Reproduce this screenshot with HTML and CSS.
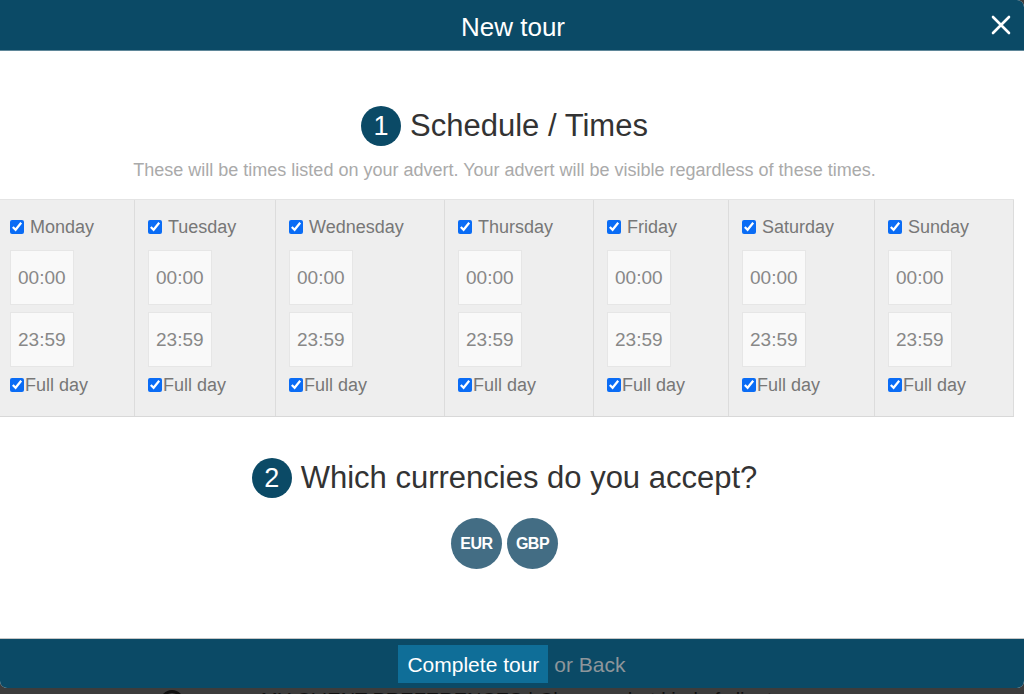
FILE: index.html
```html
<!DOCTYPE html>
<html lang="en">
<head>
    <meta charset="UTF-8">
    <meta name="viewport" content="width=device-width, initial-scale=1.0">
    <title>New tour</title>
    <link rel="stylesheet" href="styles.css">
</head>
<body>
    <div class="modal">
        <!-- Header -->
        <div class="modal-header">
            <span></span>
            <h1>New tour</h1>
            <button class="close-btn" aria-label="Close">
                <svg width="20" height="20" viewBox="0 0 20 20"><path d="M2 2 L18 18 M18 2 L2 18" stroke="#fff" stroke-width="2.6" stroke-linecap="round"/></svg>
            </button>
        </div>

        <div class="modal-body">
            <!-- Step 1 -->
            <div class="centered">
                <h2 class="step-title"><span class="step-num">1</span>Schedule / Times</h2>
                <p class="step-note">These will be times listed on your advert. Your advert will be visible regardless of these times.</p>
            </div>

            <div class="schedule">
                <div class="day"><label class="day-name"><input type="checkbox" checked>Monday</label><input class="time" type="text" value="00:00"><input class="time" type="text" value="23:59"><label class="full-day"><input type="checkbox" checked>Full day</label></div>
                <div class="day"><label class="day-name"><input type="checkbox" checked>Tuesday</label><input class="time" type="text" value="00:00"><input class="time" type="text" value="23:59"><label class="full-day"><input type="checkbox" checked>Full day</label></div>
                <div class="day"><label class="day-name"><input type="checkbox" checked>Wednesday</label><input class="time" type="text" value="00:00"><input class="time" type="text" value="23:59"><label class="full-day"><input type="checkbox" checked>Full day</label></div>
                <div class="day"><label class="day-name"><input type="checkbox" checked>Thursday</label><input class="time" type="text" value="00:00"><input class="time" type="text" value="23:59"><label class="full-day"><input type="checkbox" checked>Full day</label></div>
                <div class="day"><label class="day-name"><input type="checkbox" checked>Friday</label><input class="time" type="text" value="00:00"><input class="time" type="text" value="23:59"><label class="full-day"><input type="checkbox" checked>Full day</label></div>
                <div class="day"><label class="day-name"><input type="checkbox" checked>Saturday</label><input class="time" type="text" value="00:00"><input class="time" type="text" value="23:59"><label class="full-day"><input type="checkbox" checked>Full day</label></div>
                <div class="day"><label class="day-name"><input type="checkbox" checked>Sunday</label><input class="time" type="text" value="00:00"><input class="time" type="text" value="23:59"><label class="full-day"><input type="checkbox" checked>Full day</label></div>
            </div>

            <!-- Step 2 -->
            <div class="centered">
                <h2 class="step-title step-two"><span class="step-num">2</span>Which currencies do you accept?</h2>
                <div class="currencies">
                    <span class="currency">EUR</span>
                    <span class="currency">GBP</span>
                </div>
            </div>
        </div>

        <!-- Footer -->
        <div class="modal-footer">
            <button class="complete-btn">Complete tour</button>
            <a class="back-link" href="#">or Back</a>
        </div>
    </div>

    <!-- page behind the overlay -->
    <div class="behind">
        <span class="behind-icon"></span>
        <span class="behind-text">MY CLIENT PREFERENCES | Choose what kind of clients</span>
    </div>
</body>
</html>
```

FILE: styles.css
```css
body {
    margin: 0;
    background-color: #3c3c3c;
    font-family: "Liberation Sans", Arial, Helvetica, sans-serif;
    overflow: hidden;
}
.modal {
    height: 688px;
    display: flex;
    flex-direction: column;
    background-color: #fff;
    border-radius: 0 7px 7px 7px;
    overflow: hidden;
}
.modal-header {
    height: 50px;
    flex-shrink: 0;
    display: grid;
    grid-template-columns: 1fr auto 1fr;
    align-items: center;
    background-color: #0b4a66;
    border-bottom: 1px solid #5f8799;
}
.modal-header h1 {
    margin: 4px 0 0;
    font-size: 26px;
    font-weight: normal;
    color: #fff;
    padding-left: 2px;
}
.close-btn {
    justify-self: end;
    margin-right: 13px;
    padding: 0;
    border: 0;
    background: none;
    display: flex;
}
.modal-body {
    flex: 1;
}
.centered {
    padding-right: 15px;
    text-align: center;
}
.step-title {
    margin: 55px 0 0;
    height: 40px;
    display: flex;
    justify-content: center;
    align-items: center;
    gap: 9px;
    font-size: 31px;
    font-weight: normal;
    color: #333;
}
.step-num {
    width: 40px;
    height: 40px;
    border-radius: 50%;
    background-color: #0b4a66;
    color: #fff;
    font-size: 27px;
    line-height: 40px;
    text-align: center;
}
.step-note {
    margin: 14px 0 0;
    font-size: 18px;
    line-height: 20px;
    color: #aaa;
}
.schedule {
    margin: 19px 0 0 -3px;
    display: grid;
    grid-template-columns: 138px 141px 169px 149px 135px 146px 139px;
    width: 1017px;
    background-color: #eee;
    border-top: 1px solid #e4e4e4;
    border-bottom: 1px solid #d8d8d8;
}
.day {
    display: flex;
    flex-direction: column;
    align-items: flex-start;
    padding: 17px 0 21px 13px;
    border-right: 1px solid #dcdcdc;
    color: #777;
    font-size: 18px;
}
.day input[type="checkbox"] {
    width: 14px;
    height: 14px;
    margin: 0;
    accent-color: #0a6cf5;
}
.day-name {
    display: flex;
    align-items: center;
    gap: 6px;
    height: 20px;
}
.time {
    width: 64px;
    height: 55px;
    box-sizing: border-box;
    margin-top: 13px;
    padding: 0 0 0 7px;
    border: 1px solid #e6e6e6;
    background-color: #f9f9f9;
    font-family: inherit;
    font-size: 19px;
    color: #888;
}
.time + .time {
    margin-top: 7px;
}
.full-day {
    display: flex;
    align-items: center;
    gap: 1px;
    margin-top: 8px;
    height: 20px;
}
.step-two {
    margin-top: 41px;
}
.currencies {
    margin-top: 20px;
    display: flex;
    justify-content: center;
    gap: 5px;
}
.currency {
    width: 51px;
    height: 51px;
    border-radius: 50%;
    background-color: #436d84;
    color: #fff;
    font-size: 16px;
    font-weight: bold;
    line-height: 51px;
    text-align: center;
    letter-spacing: -0.5px;
}
.modal-footer {
    height: 49px;
    flex-shrink: 0;
    display: flex;
    justify-content: center;
    align-items: center;
    gap: 6px;
    background-color: #0b4a66;
    border-top: 1px solid #c6c6c6;
}
.complete-btn {
    height: 38px;
    padding: 3px 9px 0;
    border: 0;
    background-color: #0f6e98;
    color: #fff;
    font-family: inherit;
    font-size: 21px;
}
.back-link {
    padding-top: 3px;
    font-size: 21px;
    color: #8e969b;
    text-decoration: none;
}
.behind {
    display: flex;
    align-items: flex-start;
    height: 30px;
    padding-left: 160px;
    font-size: 20px;
    color: #111;
    line-height: 22px;
}
.behind-icon {
    width: 18px;
    height: 18px;
    margin-top: 2px;
    border: 3px solid #111;
    border-radius: 50%;
}
.behind-text {
    margin-left: 77px;
    margin-top: 1px;
}
```
